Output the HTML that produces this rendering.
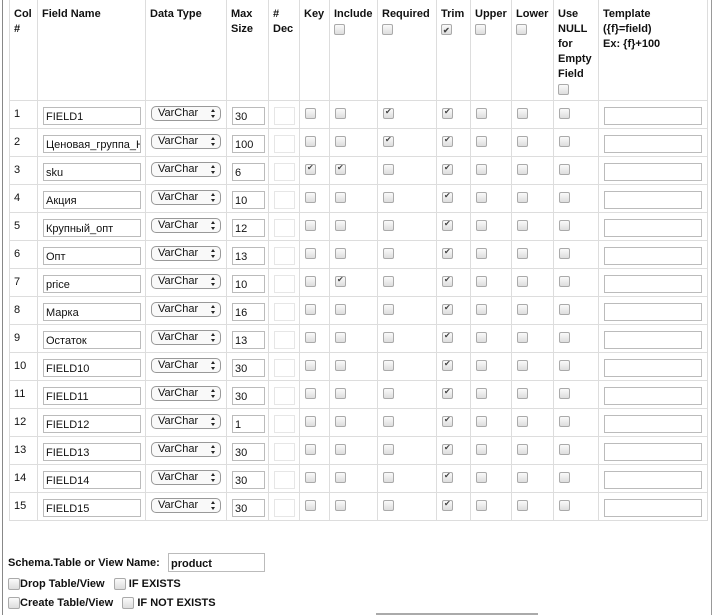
<!DOCTYPE html>
<html><head><meta charset="utf-8"><style>
body{margin:0;width:718px;height:615px;overflow:hidden;background:#fff;font-family:"Liberation Sans",Arial,sans-serif;font-size:11px;color:#111;position:relative}
.lb{position:absolute;left:2px;top:0;width:1px;height:615px;background:#888}
.rb{position:absolute;left:711px;top:0;width:1px;height:615px;background:#999}
table{position:absolute;left:9px;top:0;border-collapse:collapse;table-layout:fixed;width:698px}
td,th{border:1px solid #ddd;padding:7px 4px 0 4px;vertical-align:top;text-align:left;height:20px;overflow:hidden;white-space:nowrap}
th{height:93px;font-weight:bold;line-height:15px;padding-top:7px;white-space:normal;border-top:none}
.cb{display:inline-block;width:9px;height:9px;border:1px solid #aaa;border-radius:2px;background:linear-gradient(#fafafa,#ddd);position:relative;vertical-align:top;margin-top:2px}
.cb.c::after{content:"✔";position:absolute;left:1px;top:-2px;font-size:8px;color:#444}
td .cb{margin-left:1px;margin-top:0px}
.in{display:block;border:1px solid #bbb;line-height:18px;padding-left:2px;font-size:11px;box-sizing:border-box;height:18px;margin-top:-1px;overflow:hidden}
.fn{width:98px;margin-left:1px}
.sel{display:block;width:70px;height:15px;border:1px solid #999;border-radius:5px;box-sizing:border-box;font-size:11px;line-height:13px;padding-left:6px;position:relative;margin-left:1px;margin-top:-2px;background:#f9f9f9}
.sel::after{content:"";position:absolute;right:5px;top:2px;width:0;height:0;border-left:2px solid transparent;border-right:2px solid transparent;border-bottom:3px solid #222}
.sel::before{content:"";position:absolute;right:5px;top:8px;width:0;height:0;border-left:2px solid transparent;border-right:2px solid transparent;border-top:3px solid #222}
.ms{width:33px;margin-left:1px}
.dc{width:21px;border-color:#e6e6e6;margin-left:1px}
.tp{width:98px;border-color:#bbb;margin-left:1px}
.bot{position:absolute;left:8px;font-weight:bold;font-size:11px}
.bot .cb{width:10px;height:10px;margin-top:0}
</style></head><body>
<div class="lb"></div><div class="rb"></div>
<table>
<colgroup><col style="width:28px"><col style="width:108px"><col style="width:81px"><col style="width:42px"><col style="width:31px"><col style="width:30px"><col style="width:48px"><col style="width:59px"><col style="width:34px"><col style="width:41px"><col style="width:42px"><col style="width:45px"><col style="width:109px"></colgroup>
<tr><th>Col #</th><th>Field Name</th><th>Data Type</th><th>Max Size</th><th># Dec</th><th>Key</th><th>Include<br><span class="cb"></span></th><th>Required<br><span class="cb"></span></th><th>Trim<br><span class="cb c"></span></th><th>Upper<br><span class="cb"></span></th><th>Lower<br><span class="cb"></span></th><th>Use NULL for Empty Field<br><span class="cb"></span></th><th>Template<br>({f}=field)<br>Ex: {f}+100</th></tr>
<tr><td>1</td><td><span class="in fn">FIELD1</span></td><td><span class="sel">VarChar</span></td><td><span class="in ms">30</span></td><td><span class="in dc"></span></td><td><span class="cb"></span></td><td><span class="cb"></span></td><td><span class="cb c"></span></td><td><span class="cb c"></span></td><td><span class="cb"></span></td><td><span class="cb"></span></td><td><span class="cb"></span></td><td><span class="in tp"></span></td></tr>
<tr><td>2</td><td><span class="in fn">Ценовая_группа_Н</span></td><td><span class="sel">VarChar</span></td><td><span class="in ms">100</span></td><td><span class="in dc"></span></td><td><span class="cb"></span></td><td><span class="cb"></span></td><td><span class="cb c"></span></td><td><span class="cb c"></span></td><td><span class="cb"></span></td><td><span class="cb"></span></td><td><span class="cb"></span></td><td><span class="in tp"></span></td></tr>
<tr><td>3</td><td><span class="in fn">sku</span></td><td><span class="sel">VarChar</span></td><td><span class="in ms">6</span></td><td><span class="in dc"></span></td><td><span class="cb c"></span></td><td><span class="cb c"></span></td><td><span class="cb"></span></td><td><span class="cb c"></span></td><td><span class="cb"></span></td><td><span class="cb"></span></td><td><span class="cb"></span></td><td><span class="in tp"></span></td></tr>
<tr><td>4</td><td><span class="in fn">Акция</span></td><td><span class="sel">VarChar</span></td><td><span class="in ms">10</span></td><td><span class="in dc"></span></td><td><span class="cb"></span></td><td><span class="cb"></span></td><td><span class="cb"></span></td><td><span class="cb c"></span></td><td><span class="cb"></span></td><td><span class="cb"></span></td><td><span class="cb"></span></td><td><span class="in tp"></span></td></tr>
<tr><td>5</td><td><span class="in fn">Крупный_опт</span></td><td><span class="sel">VarChar</span></td><td><span class="in ms">12</span></td><td><span class="in dc"></span></td><td><span class="cb"></span></td><td><span class="cb"></span></td><td><span class="cb"></span></td><td><span class="cb c"></span></td><td><span class="cb"></span></td><td><span class="cb"></span></td><td><span class="cb"></span></td><td><span class="in tp"></span></td></tr>
<tr><td>6</td><td><span class="in fn">Опт</span></td><td><span class="sel">VarChar</span></td><td><span class="in ms">13</span></td><td><span class="in dc"></span></td><td><span class="cb"></span></td><td><span class="cb"></span></td><td><span class="cb"></span></td><td><span class="cb c"></span></td><td><span class="cb"></span></td><td><span class="cb"></span></td><td><span class="cb"></span></td><td><span class="in tp"></span></td></tr>
<tr><td>7</td><td><span class="in fn">price</span></td><td><span class="sel">VarChar</span></td><td><span class="in ms">10</span></td><td><span class="in dc"></span></td><td><span class="cb"></span></td><td><span class="cb c"></span></td><td><span class="cb"></span></td><td><span class="cb c"></span></td><td><span class="cb"></span></td><td><span class="cb"></span></td><td><span class="cb"></span></td><td><span class="in tp"></span></td></tr>
<tr><td>8</td><td><span class="in fn">Марка</span></td><td><span class="sel">VarChar</span></td><td><span class="in ms">16</span></td><td><span class="in dc"></span></td><td><span class="cb"></span></td><td><span class="cb"></span></td><td><span class="cb"></span></td><td><span class="cb c"></span></td><td><span class="cb"></span></td><td><span class="cb"></span></td><td><span class="cb"></span></td><td><span class="in tp"></span></td></tr>
<tr><td>9</td><td><span class="in fn">Остаток</span></td><td><span class="sel">VarChar</span></td><td><span class="in ms">13</span></td><td><span class="in dc"></span></td><td><span class="cb"></span></td><td><span class="cb"></span></td><td><span class="cb"></span></td><td><span class="cb c"></span></td><td><span class="cb"></span></td><td><span class="cb"></span></td><td><span class="cb"></span></td><td><span class="in tp"></span></td></tr>
<tr><td>10</td><td><span class="in fn">FIELD10</span></td><td><span class="sel">VarChar</span></td><td><span class="in ms">30</span></td><td><span class="in dc"></span></td><td><span class="cb"></span></td><td><span class="cb"></span></td><td><span class="cb"></span></td><td><span class="cb c"></span></td><td><span class="cb"></span></td><td><span class="cb"></span></td><td><span class="cb"></span></td><td><span class="in tp"></span></td></tr>
<tr><td>11</td><td><span class="in fn">FIELD11</span></td><td><span class="sel">VarChar</span></td><td><span class="in ms">30</span></td><td><span class="in dc"></span></td><td><span class="cb"></span></td><td><span class="cb"></span></td><td><span class="cb"></span></td><td><span class="cb c"></span></td><td><span class="cb"></span></td><td><span class="cb"></span></td><td><span class="cb"></span></td><td><span class="in tp"></span></td></tr>
<tr><td>12</td><td><span class="in fn">FIELD12</span></td><td><span class="sel">VarChar</span></td><td><span class="in ms">1</span></td><td><span class="in dc"></span></td><td><span class="cb"></span></td><td><span class="cb"></span></td><td><span class="cb"></span></td><td><span class="cb c"></span></td><td><span class="cb"></span></td><td><span class="cb"></span></td><td><span class="cb"></span></td><td><span class="in tp"></span></td></tr>
<tr><td>13</td><td><span class="in fn">FIELD13</span></td><td><span class="sel">VarChar</span></td><td><span class="in ms">30</span></td><td><span class="in dc"></span></td><td><span class="cb"></span></td><td><span class="cb"></span></td><td><span class="cb"></span></td><td><span class="cb c"></span></td><td><span class="cb"></span></td><td><span class="cb"></span></td><td><span class="cb"></span></td><td><span class="in tp"></span></td></tr>
<tr><td>14</td><td><span class="in fn">FIELD14</span></td><td><span class="sel">VarChar</span></td><td><span class="in ms">30</span></td><td><span class="in dc"></span></td><td><span class="cb"></span></td><td><span class="cb"></span></td><td><span class="cb"></span></td><td><span class="cb c"></span></td><td><span class="cb"></span></td><td><span class="cb"></span></td><td><span class="cb"></span></td><td><span class="in tp"></span></td></tr>
<tr><td>15</td><td><span class="in fn">FIELD15</span></td><td><span class="sel">VarChar</span></td><td><span class="in ms">30</span></td><td><span class="in dc"></span></td><td><span class="cb"></span></td><td><span class="cb"></span></td><td><span class="cb"></span></td><td><span class="cb c"></span></td><td><span class="cb"></span></td><td><span class="cb"></span></td><td><span class="cb"></span></td><td><span class="in tp"></span></td></tr>
</table>
<div class="bot" style="top:557px">Schema.Table or View Name:</div>
<div style="position:absolute;left:168px;top:553px;width:97px;height:19px;border:1px solid #bbb;box-sizing:border-box;font-weight:bold;font-size:11px;line-height:21px;padding-left:2px">product</div>
<div class="bot" style="top:578px;left:8px"><span class="cb"></span>Drop Table/View &nbsp;&nbsp;<span class="cb"></span> IF EXISTS</div>
<div class="bot" style="top:597px;left:8px"><span class="cb"></span>Create Table/View &nbsp;&nbsp;<span class="cb"></span> IF NOT EXISTS</div>
<div style="position:absolute;left:376px;top:613px;width:162px;height:2px;background:#aaa"></div>
</body></html>
